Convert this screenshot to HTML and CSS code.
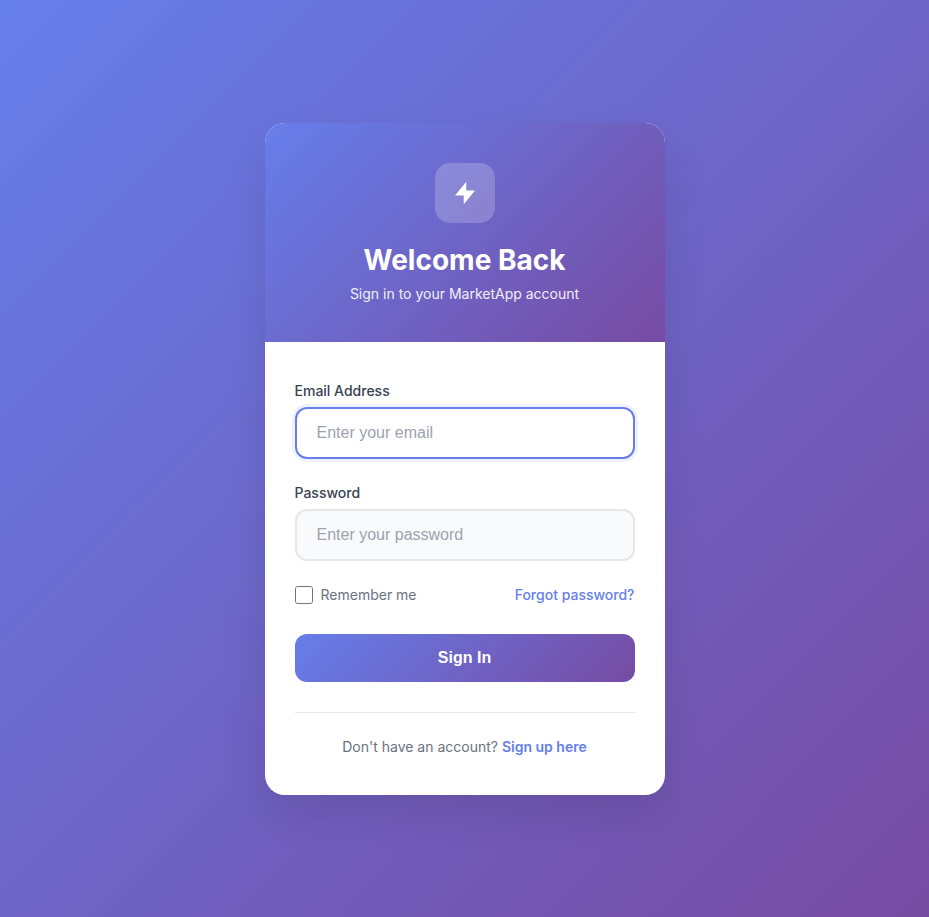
FILE: index.html
```html
<!DOCTYPE html>
<html lang="en">
<head>
<meta charset="UTF-8">
<title>Sign In - MarketApp</title>
<link rel="stylesheet" href="styles.css">
</head>
<body>
<main class="card">
  <header class="card-header">
    <div class="logo">
      <svg viewBox="0 0 24 24" width="30" height="30" fill="currentColor"><path d="M13 10V3L4 14h7v7l9-11h-7z"/></svg>
    </div>
    <h1>Welcome Back</h1>
    <p>Sign in to your MarketApp account</p>
  </header>
  <div class="card-body">
    <form>
      <div class="field">
        <label for="email">Email Address</label>
        <input class="focused" id="email" type="email" placeholder="Enter your email">
      </div>
      <div class="field">
        <label for="password">Password</label>
        <input id="password" type="password" placeholder="Enter your password">
      </div>
      <div class="options">
        <label class="remember"><input type="checkbox">Remember me</label>
        <a href="#">Forgot password?</a>
      </div>
      <button type="button">Sign In</button>
    </form>
    <div class="signup">Don't have an account? <a href="#">Sign up here</a></div>
  </div>
</main>
</body>
</html>
```
FILE: styles.css
```css
* { margin: 0; padding: 0; box-sizing: border-box; }
body {
  font-family: Inter, sans-serif;
  background: linear-gradient(135deg, #667eea 0%, #764ba2 100%);
  min-height: 100vh;
  display: flex;
  align-items: center;
  justify-content: center;
  padding: 20px;
}
.card {
  width: 400px;
  background: #fff;
  border-radius: 20px;
  box-shadow: 0 20px 40px rgba(0, 0, 0, 0.1);
  overflow: hidden;
}
.card-header {
  background: linear-gradient(135deg, #667eea 0%, #764ba2 100%);
  padding: 40px 30px;
  text-align: center;
  color: #fff;
}
.logo {
  width: 60px;
  height: 60px;
  margin: 0 auto 20px;
  border-radius: 15px;
  background: rgba(255, 255, 255, 0.2);
  display: flex;
  align-items: center;
  justify-content: center;
}
h1 { font-size: 28px; line-height: 34px; font-weight: 700; margin-bottom: 8px; }
.card-header p { font-size: 14px; line-height: 17px; opacity: 0.9; }
.card-body { padding: 40px 30px; }
.field { margin-bottom: 25px; }
.field label {
  display: block;
  font-size: 14px;
  line-height: 17px;
  font-weight: 500;
  color: #374151;
  margin-bottom: 8px;
}
.field input {
  display: block;
  width: 100%;
  height: 52px;
  padding: 15px 20px;
  border: 2px solid #e5e7eb;
  border-radius: 12px;
  font: 16px "Liberation Sans", sans-serif;
  background: #f9fafb;
  outline: none;
}
.field input::placeholder { color: #9ca3af; }
.field .focused {
  border-color: #667eea;
  background: #fff;
  box-shadow: 0 0 0 3px rgba(102, 126, 234, 0.1);
}
.options {
  display: flex;
  align-items: center;
  justify-content: space-between;
  margin-bottom: 30px;
  font-size: 14px;
  line-height: 18px;
}
.remember { display: flex; align-items: center; color: #6b7280; }
.remember input { width: 18px; height: 18px; margin-right: 8px; }
a { color: #667eea; text-decoration: none; font-weight: 500; }
button {
  display: block;
  width: 100%;
  height: 48px;
  border: none;
  border-radius: 12px;
  background: linear-gradient(135deg, #667eea 0%, #764ba2 100%);
  color: #fff;
  font: 600 16px "Liberation Sans", sans-serif;
}
.signup {
  margin-top: 30px;
  padding-top: 25px;
  border-top: 1px solid #e5e7eb;
  text-align: center;
  font-size: 14px;
  line-height: 17px;
  color: #6b7280;
}
.signup a { font-weight: 600; }
```
